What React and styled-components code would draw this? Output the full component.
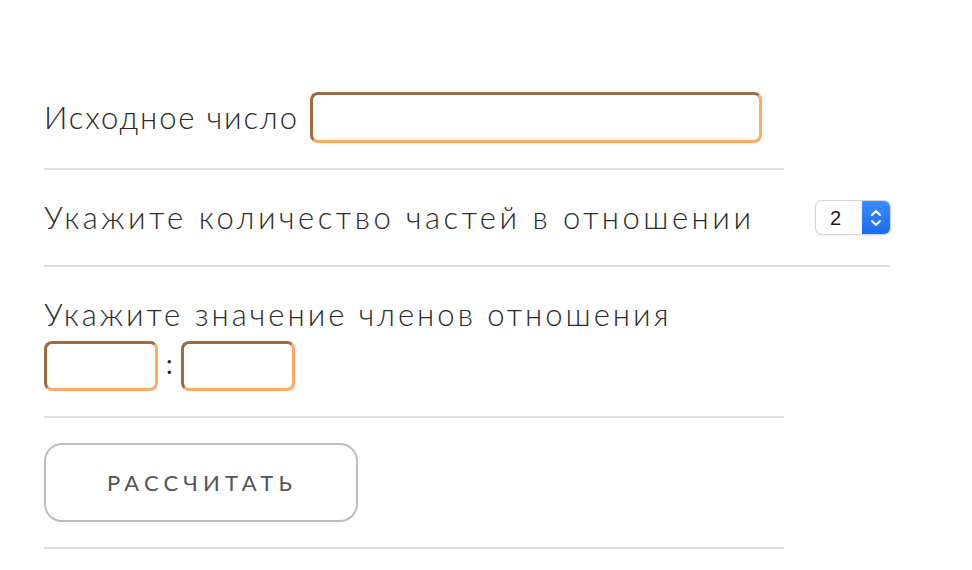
import React from 'react';
import styled, { createGlobalStyle } from 'styled-components';

const GlobalStyle = createGlobalStyle`
  html, body {
    margin: 0;
    padding: 0;
    background: #fff;
  }
  body {
    font-family: "Lato", "DejaVu Sans", sans-serif;
    color: #2b2b2b;
  }
`;

const Form = styled.form`
  width: 740px;
  padding: 67px 0 0 44px;
`;

const Row = styled.div`
  width: ${(p) => p.$width || 740}px;
  padding: 25px 0;
  border-bottom: 2px solid #e0e0e0;
  display: ${(p) => (p.$inline ? 'flex' : 'block')};
  align-items: center;
  justify-content: ${(p) => (p.$spread ? 'space-between' : 'flex-start')};
  gap: 11px;
`;

const Label = styled.label`
  font-size: 31px;
  font-weight: 300;
  line-height: 45px;
  letter-spacing: ${(p) => p.$spacing || 3}px;
  white-space: nowrap;
`;

const TextInput = styled.input`
  box-sizing: border-box;
  width: ${(p) => p.$w}px;
  height: ${(p) => p.$h}px;
  border-width: 3px;
  border-style: solid;
  border-top-color: #9d6a42;
  border-left-color: #9d6a42;
  border-bottom-color: #ffaa66;
  border-right-color: #ffaa66;
  border-radius: 8px;
  background: #fff;
  outline: none;
  font-size: 20px;
  padding: 0 10px;
`;

const Ratio = styled.div`
  display: flex;
  align-items: center;
  gap: 8px;
  margin-top: 4px;
`;

const Colon = styled.span`
  font-size: 26px;
  line-height: 1;
  color: #222;
  padding-bottom: 4px;
`;

const SelectWrap = styled.div`
  position: relative;
  width: 74px;
  height: 33px;
  border-radius: 6px;
  box-shadow: 0 0 0 1px #d4d4d4, 0 1px 2px rgba(0, 0, 0, 0.18);
  background: #fff;
  overflow: hidden;
`;

const NativeSelect = styled.select`
  appearance: none;
  -webkit-appearance: none;
  width: 100%;
  height: 100%;
  border: none;
  background: transparent;
  font-family: "Liberation Sans", Arial, sans-serif;
  font-size: 20px;
  color: #1a1a1a;
  padding: 0 0 0 14px;
  outline: none;
`;

const Stepper = styled.span`
  position: absolute;
  top: 0;
  right: 0;
  width: 28px;
  height: 100%;
  background: linear-gradient(#3d8cff, #1a6cf7);
  display: flex;
  align-items: center;
  justify-content: center;
  pointer-events: none;
`;

const Button = styled.button`
  width: 314px;
  height: 79px;
  background: #fff;
  border: 2px solid #bdbdbd;
  border-radius: 18px;
  font-family: "Lato", sans-serif;
  font-size: 22px;
  font-weight: 400;
  letter-spacing: 5.2px;
  padding-left: 8px;
  color: #555;
  cursor: pointer;
`;

export default function App() {
  return (
    <>
      <GlobalStyle />
      <Form onSubmit={(e) => e.preventDefault()}>
        <Row $inline>
          <Label htmlFor="num" $spacing={1.9}>Исходное число</Label>
          <TextInput id="num" type="text" $w={452} $h={51} />
        </Row>
        <Row $inline $spread $width={846}>
          <Label htmlFor="parts" $spacing={3.5}>Укажите количество частей в отношении</Label>
          <SelectWrap>
            <NativeSelect id="parts" defaultValue="2">
              <option value="2">2</option>
              <option value="3">3</option>
              <option value="4">4</option>
            </NativeSelect>
            <Stepper>
              <svg width="14" height="22" viewBox="0 0 14 22" fill="none" stroke="#fff" strokeWidth="2" strokeLinecap="round" strokeLinejoin="round">
                <path d="M3 8 L7 4 L11 8" />
                <path d="M3 14 L7 18 L11 14" />
              </svg>
            </Stepper>
          </SelectWrap>
        </Row>
        <Row>
          <Label>Укажите значение членов отношения</Label>
          <Ratio>
            <TextInput type="text" $w={114} $h={50} />
            <Colon>:</Colon>
            <TextInput type="text" $w={114} $h={50} />
          </Ratio>
        </Row>
        <Row>
          <Button type="submit">РАССЧИТАТЬ</Button>
        </Row>
      </Form>
    </>
  );
}
